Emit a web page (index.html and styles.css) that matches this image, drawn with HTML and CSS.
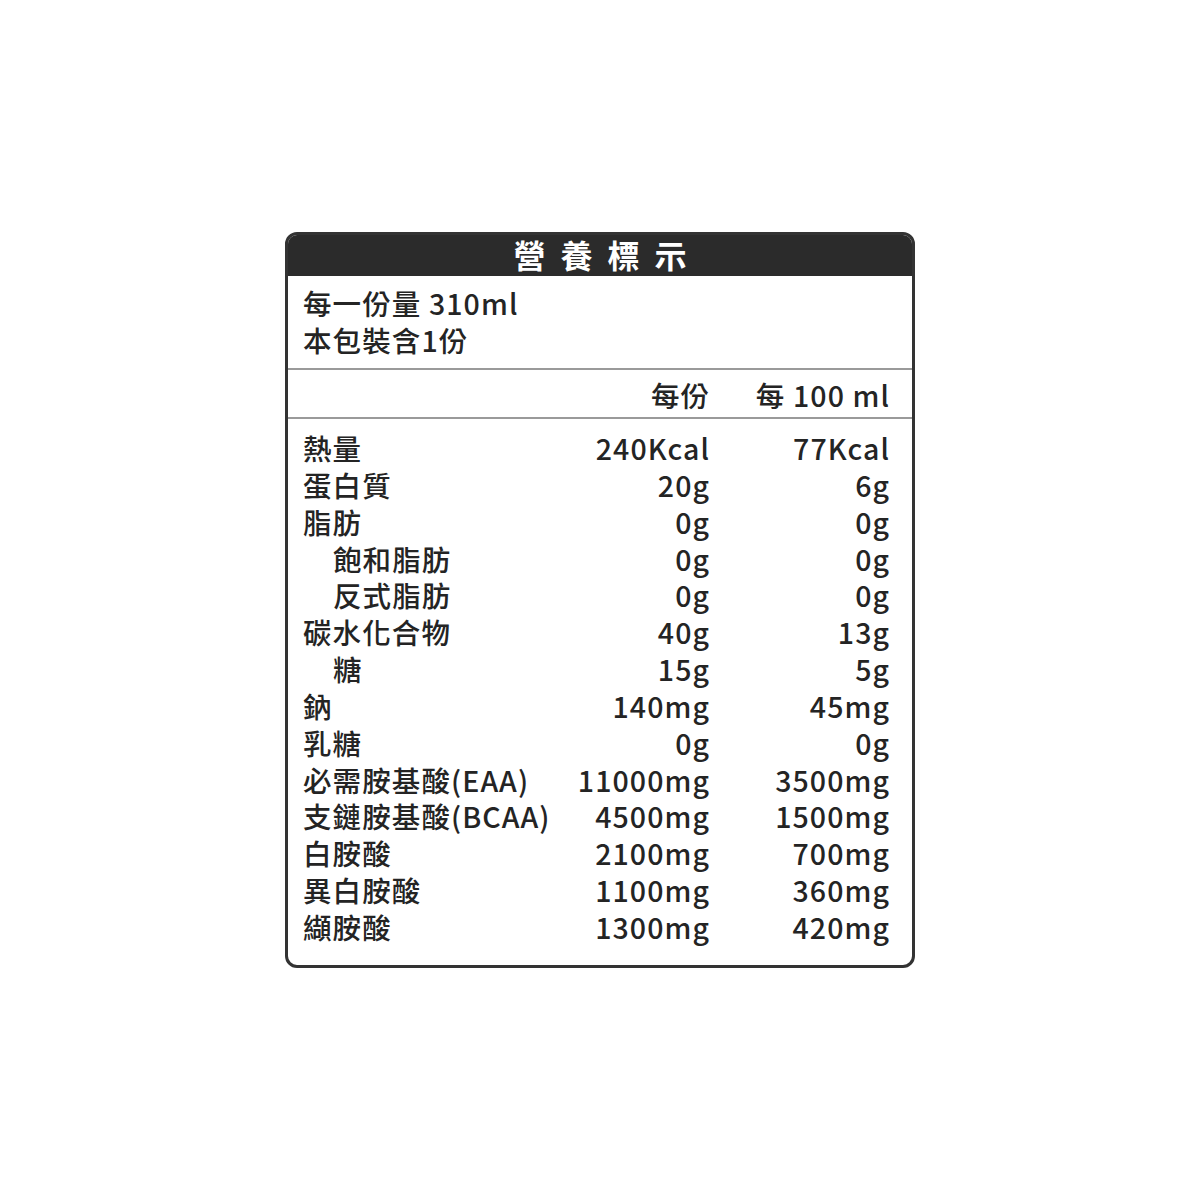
FILE: index.html
```html
<!DOCTYPE html>
<html lang="zh-Hant">
<head>
<meta charset="utf-8">
<title>營養標示</title>
<link rel="stylesheet" href="styles.css">
</head>
<body>
<div class="page">
  <div class="label">
    <div class="title">營養標示</div>
    <div class="serving">
      <div>每一份量 310ml</div>
      <div>本包裝含1份</div>
    </div>
    <div class="colhead">
      <span></span><span class="num">每份</span><span class="num">每 100 ml</span>
    </div>
    <div class="rows">
      <span>熱量</span><span class="num">240Kcal</span><span class="num">77Kcal</span>
      <span>蛋白質</span><span class="num">20g</span><span class="num">6g</span>
      <span>脂肪</span><span class="num">0g</span><span class="num">0g</span>
      <span class="sub">飽和脂肪</span><span class="num">0g</span><span class="num">0g</span>
      <span class="sub">反式脂肪</span><span class="num">0g</span><span class="num">0g</span>
      <span>碳水化合物</span><span class="num">40g</span><span class="num">13g</span>
      <span class="sub">糖</span><span class="num">15g</span><span class="num">5g</span>
      <span>鈉</span><span class="num">140mg</span><span class="num">45mg</span>
      <span>乳糖</span><span class="num">0g</span><span class="num">0g</span>
      <span>必需胺基酸(EAA)</span><span class="num">11000mg</span><span class="num">3500mg</span>
      <span>支鏈胺基酸(BCAA)</span><span class="num">4500mg</span><span class="num">1500mg</span>
      <span>白胺酸</span><span class="num">2100mg</span><span class="num">700mg</span>
      <span>異白胺酸</span><span class="num">1100mg</span><span class="num">360mg</span>
      <span>纈胺酸</span><span class="num">1300mg</span><span class="num">420mg</span>
    </div>
  </div>
</div>
</body>
</html>
```
FILE: styles.css
```css
html, body {
  margin: 0;
  padding: 0;
  background: #ffffff;
}
body {
  font-family: "Noto Sans CJK TC", "Noto Sans", sans-serif;
  color: #242424;
}
.page {
  width: 1200px;
  height: 1200px;
  padding-top: 232px;
  box-sizing: border-box;
}
.label {
  width: 630px;
  margin-left: 285px;
  border: 3px solid #333333;
  border-radius: 12px;
  overflow: hidden;
  box-sizing: border-box;
}
.title {
  background: #2b2b2b;
  color: #ffffff;
  height: 41px;
  line-height: 39px;
  text-align: center;
  font-size: 32px;
  font-weight: 700;
  letter-spacing: 15px;
  padding-left: 15px;
}
.serving {
  padding: 8px 23px 10px 15px;
  font-size: 28.5px;
  line-height: 37px;
  font-weight: 500;
  letter-spacing: 1.1px;
  border-bottom: 2px solid #9a9a9a;
}
.colhead,
.rows {
  display: grid;
  grid-template-columns: 1fr 150px 180px;
  padding: 0 23px 0 15px;
  font-size: 28.5px;
  font-weight: 500;
  letter-spacing: 1.1px;
}
.colhead {
  line-height: 37px;
  padding-top: 6px;
  padding-bottom: 4px;
  border-bottom: 2px solid #9a9a9a;
}
.rows {
  line-height: 36.85px;
  padding-top: 11px;
  padding-bottom: 19px;
}
.num {
  text-align: right;
  white-space: nowrap;
  margin-right: -1.1px;
}
.sub {
  padding-left: 30px;
}
```
